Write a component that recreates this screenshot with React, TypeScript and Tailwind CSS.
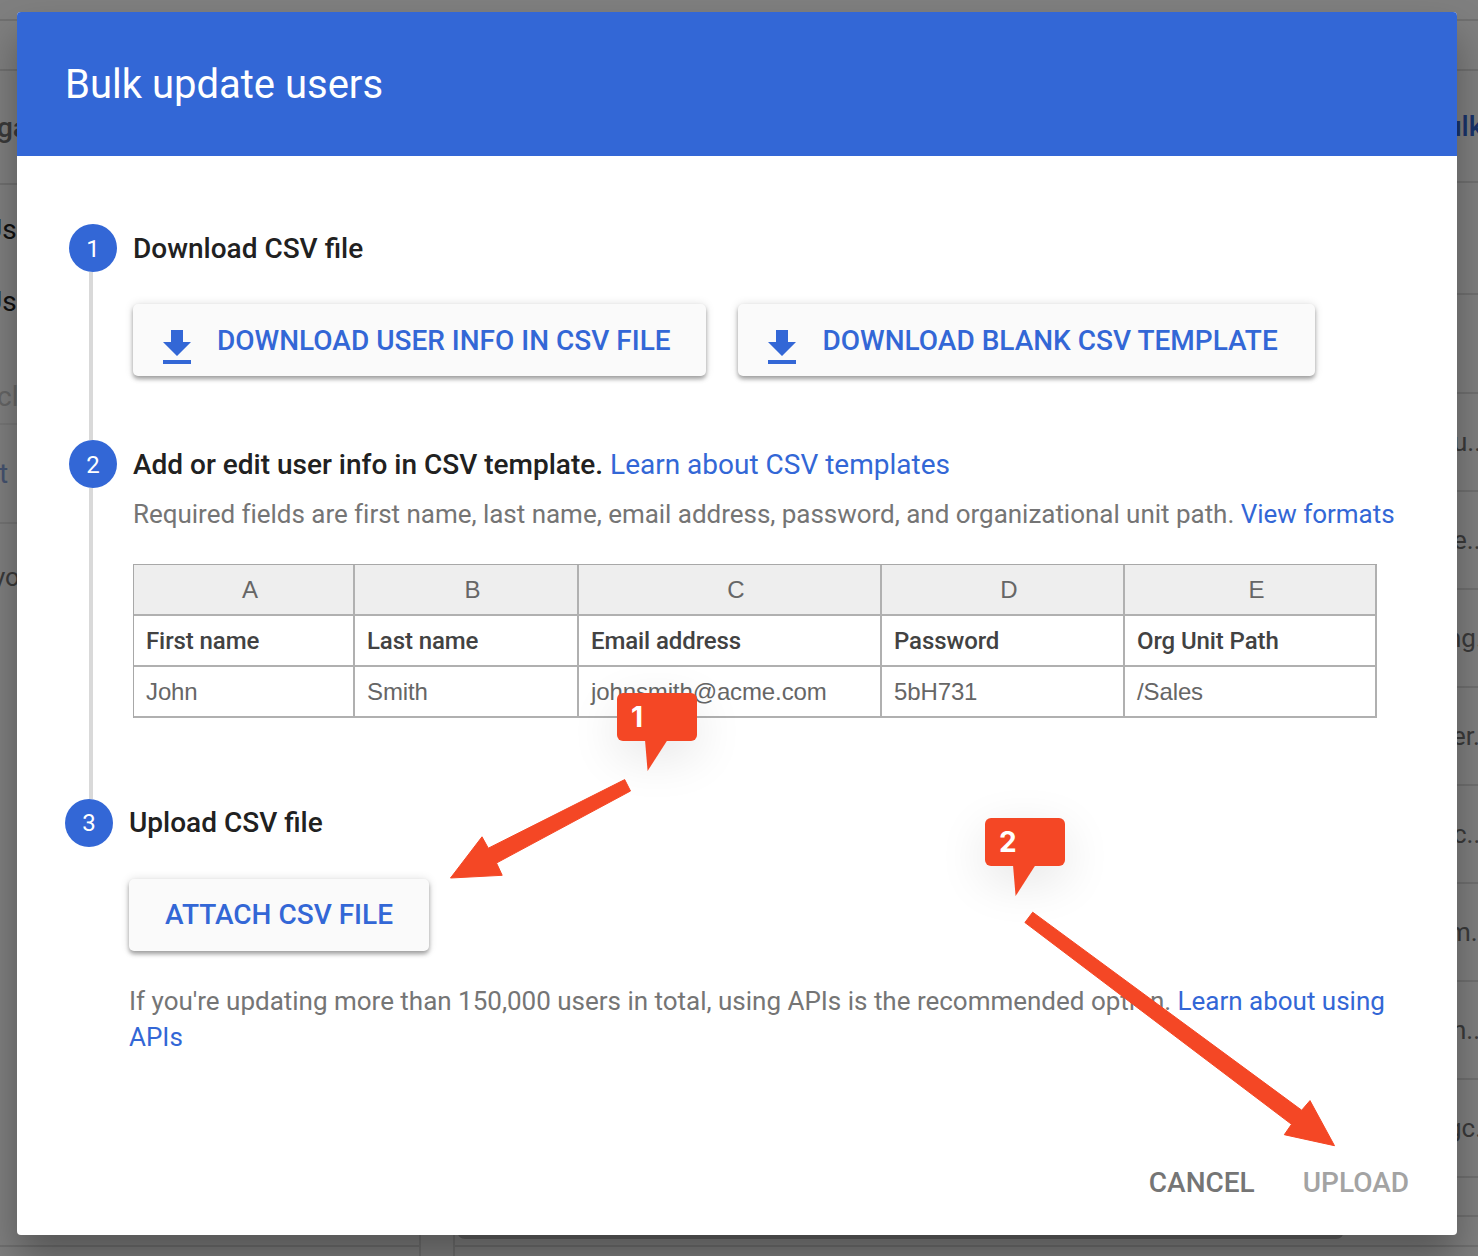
import React from 'react';

const domainRows = [
  { text: 'u...', offset: 'ml-[998px]' },
  { text: 'e...', offset: 'ml-[998px]' },
  { text: 'ng...', offset: 'ml-[992px]' },
  { text: 'er...', offset: 'ml-[997px]' },
  { text: 'c...', offset: 'ml-[998px]' },
  { text: 'm...', offset: 'ml-[993px]' },
  { text: 'n...', offset: 'ml-[997px]' },
  { text: 'gc...', offset: 'ml-[992px]' },
];

const columns = [
  { letter: 'A', label: 'First name', value: 'John' },
  { letter: 'B', label: 'Last name', value: 'Smith' },
  { letter: 'C', label: 'Email address', value: 'johnsmith@acme.com' },
  { letter: 'D', label: 'Password', value: '5bH731' },
  { letter: 'E', label: 'Org Unit Path', value: '/Sales' },
];

const tableGrid = 'grid grid-cols-[221px_224px_303px_243px_252px]';

function DownloadIcon() {
  return (
    <svg viewBox="0 0 24 24" className="mt-4 h-12 w-12 shrink-0 fill-[#3367d6]">
      <path d="M19 9h-4V3H9v6H5l7 7 7-7zM5 18v2h14v-2H5z" />
    </svg>
  );
}

function RaisedButton({ className, children }: { className: string; children: React.ReactNode }) {
  return (
    <button
      className={`flex h-[72px] items-center whitespace-nowrap rounded-[5px] bg-[#fafafa] text-[28px] font-medium text-[#3367d6] shadow-[0_3px_4px_rgba(0,0,0,0.34),0_0_10px_rgba(0,0,0,0.12)] ${className}`}
    >
      {children}
    </button>
  );
}

function Step({
  number,
  title,
  link,
  last,
  className = '',
  children,
}: {
  number: number;
  title: string;
  link?: string;
  last?: boolean;
  className?: string;
  children: React.ReactNode;
}) {
  const nudge = last ? '' : 'pt-0.5';
  return (
    <section className={`flex gap-4 ${className}`}>
      <div className="flex w-12 shrink-0 flex-col">
        <div
          className={`flex h-12 w-12 shrink-0 items-center justify-center rounded-full bg-[#3367d6] text-2xl text-white ${nudge}`}
        >
          {number}
        </div>
        {!last && <div className="ml-5 w-1 flex-1 bg-[#d9d9d9]" />}
      </div>
      <div className="min-w-0">
        <h2
          className={`flex h-12 items-center gap-[7px] whitespace-nowrap text-[28px] font-medium text-[#212121] ${nudge}`}
        >
          {title}
          {link && <a className="font-normal text-[#3367d6]">{link}</a>}
        </h2>
        {children}
      </div>
    </section>
  );
}

function Backdrop() {
  return (
    <div className="flex h-full bg-white leading-none text-[#757575]">
      <div className="flex w-[421px] flex-col overflow-hidden whitespace-nowrap text-[28px]">
        <div className="h-[21px] shrink-0 border-b-2 border-[#e0e0e0]" />
        <div className="h-[50px] shrink-0 border-b-2 border-[#e0e0e0]" />
        <div className="flex h-[114px] shrink-0 items-center border-b-2 border-[#e0e0e0] pt-0.5 font-medium">
          <span className="-ml-[3px]">ga</span>
        </div>
        <div className="flex h-[240px] shrink-0 flex-col border-b-2 border-[#eeeeee] pt-[9px] text-[#212121]">
          <span className="-ml-[16px] flex h-[72px] items-center">Us</span>
          <span className="-ml-[16px] flex h-[72px] items-center">Us</span>
          <span className="-ml-[3px] mt-[33px] flex h-[52px] items-center text-[#cccccc]">cl</span>
        </div>
        <div className="flex h-[99px] shrink-0 items-center border-b-2 border-[#e8e8e8] text-[#8ba6e0]">
          <span className="-ml-[1px]">t</span>
        </div>
        <div className="flex h-[106px] shrink-0 items-center text-[26px]">
          <span className="-ml-[7px]">yo</span>
        </div>
        <div className="h-[617px] shrink-0 border-b-2 border-r-2 border-[#e0e0e0]" />
        <div className="flex-1 border-r-2 border-[#e0e0e0]" />
      </div>
      <div className="w-8 shrink-0" />
      <div className="flex flex-1 flex-col overflow-hidden whitespace-nowrap text-[26px]">
        <div className="h-[21px] shrink-0 border-b-2 border-[#e0e0e0]" />
        <div className="h-[50px] shrink-0 border-b-2 border-[#e0e0e0]" />
        <div className="flex h-[112px] shrink-0 items-center border-b-2 border-[#e0e0e0] pt-0.5 text-[28px] font-medium text-[#3367d6]">
          <span className="ml-[993px]">ulk</span>
        </div>
        <div className="flex flex-1 flex-col border-l-2 border-[#e0e0e0]">
          <div className="h-[112px] shrink-0 border-b-2 border-[#e0e0e0]" />
          <div className="h-[99px] shrink-0 border-b-2 border-[#e0e0e0]" />
          {domainRows.map((row) => (
            <div key={row.text} className="flex h-[98px] shrink-0 items-center border-b-2 border-[#e0e0e0]">
              <span className={row.offset}>{row.text}</span>
            </div>
          ))}
          <div className="h-[39px] shrink-0 border-b-2 border-[#e0e0e0]" />
          <div className="flex h-[30px] shrink-0 flex-col border-b-2 border-[#e0e0e0]">
            <div className="ml-0.5 h-[22px] w-[887px] rounded-[8px] bg-[#c0c0c0]" />
          </div>
        </div>
      </div>
    </div>
  );
}

function Callout({ label, className }: { label: string; className: string }) {
  return (
    <div className={`absolute ${className}`}>
      <div className="flex h-12 w-20 items-center rounded-[6px] bg-[#f44725] pl-[14px] font-['Inter'] text-[28px] font-bold text-white shadow-[0_14px_50px_rgba(0,0,0,0.11)]">
        {label}
      </div>
      <svg width="80" height="31" viewBox="0 0 80 31" className="-mt-px block fill-[#f44725]">
        <path d="M28 0H50.500L30.600 31Z" />
      </svg>
    </div>
  );
}

export default function App() {
  return (
    <div className="relative h-[1256px] w-[1478px] overflow-hidden font-['Roboto',sans-serif]">
      <Backdrop />

      <div className="absolute inset-0 bg-black/50 pl-[17px] pt-3">
        <div className="flex h-[1223px] w-[1440px] flex-col rounded-[4px] bg-white shadow-[0_24px_40px_rgba(0,0,0,0.32)]">
          <header className="flex h-36 shrink-0 items-center rounded-t-[4px] bg-[#3367d6] pl-12 pt-0.5">
            <h1 className="text-[40px] leading-none text-white">Bulk update users</h1>
          </header>

          <main className="flex flex-1 flex-col pl-12 pt-[68px]">
            <Step number={1} title="Download CSV file" className="ml-1 h-[216px]">
              <div className="mt-8 flex gap-8">
                <RaisedButton className="w-[573px] gap-4 pl-5">
                  <DownloadIcon />
                  <span className="pt-0.5">DOWNLOAD USER INFO IN CSV FILE</span>
                </RaisedButton>
                <RaisedButton className="w-[577px] gap-[16.5px] pl-5">
                  <DownloadIcon />
                  <span className="pt-0.5">DOWNLOAD BLANK CSV TEMPLATE</span>
                </RaisedButton>
              </div>
            </Step>

            <Step
              number={2}
              title="Add or edit user info in CSV template."
              link="Learn about CSV templates"
              className="ml-1 h-[359px]"
            >
              <p className="mt-2 whitespace-nowrap text-[26px] leading-9 tracking-[-0.028px] text-[#757575]">
                Required fields are first name, last name, email address, password, and organizational unit path.{' '}
                <a className="text-[#3367d6]">View formats</a>
              </p>
              <div className="mt-8 w-[1244px] border-l border-t border-[#a8a8a8] text-2xl leading-none">
                <div className={`${tableGrid} h-[51px] bg-[#eeeeee] font-['Liberation_Sans'] text-[#666666]`}>
                  {columns.map((column) => (
                    <div key={column.letter} className="flex items-center justify-center border-b-2 border-r-2 border-[#b0b0b0] pl-[13px]">
                      {column.letter}
                    </div>
                  ))}
                </div>
                <div className={`${tableGrid} h-[51px] font-medium text-[#424242]`}>
                  {columns.map((column) => (
                    <div key={column.letter} className="flex items-center border-b-2 border-r-2 border-[#b0b0b0] pl-3 tracking-[-0.1px]">
                      {column.label}
                    </div>
                  ))}
                </div>
                <div className={`${tableGrid} h-[51px] font-['Liberation_Sans'] text-[#666666]`}>
                  {columns.map((column) => (
                    <div key={column.letter} className="flex items-center border-b-2 border-r-2 border-[#b0b0b0] pl-3 tracking-[-0.12px]">
                      {column.value}
                    </div>
                  ))}
                </div>
              </div>
            </Step>

            <Step number={3} title="Upload CSV file" last>
              <RaisedButton className="mt-8 w-[300px] justify-center">ATTACH CSV FILE</RaisedButton>
              <p className="mt-8 w-[1272px] text-[26px] leading-9 tracking-[-0.01px] text-[#757575]">
                If you're updating more than 150,000 users in total, using APIs is the recommended option.{' '}
                <a className="text-[#3367d6]">Learn about using APIs</a>
              </p>
            </Step>
          </main>

          <footer className="flex h-[105px] shrink-0 items-start justify-end gap-12 pr-12 text-[28px] font-medium leading-[105px]">
            <button className="text-[#757575]">CANCEL</button>
            <button className="text-[#a3a3a3]">UPLOAD</button>
          </footer>
        </div>
      </div>

      <Callout label="1" className="left-[617px] top-[693px]" />
      <Callout label="2" className="left-[985px] top-[818px]" />
      <svg
        width="1478"
        height="1256"
        viewBox="0 0 1478 1256"
        className="pointer-events-none absolute inset-0 fill-[#f44725] stroke-[#f44725]"
        strokeWidth="1"
        strokeLinejoin="round"
      >
        <path d="M450.500 878L482 836.800L488.300 848.200L624.700 779.600L630.500 791L496.500 863L502.200 875.300Z" />
        <path d="M1032.700 912.200L1301.700 1110.200L1310 1100.600L1334.500 1145.700L1284.300 1134.700L1291.500 1124.300L1024.900 922.500Z" />
      </svg>
    </div>
  );
}
